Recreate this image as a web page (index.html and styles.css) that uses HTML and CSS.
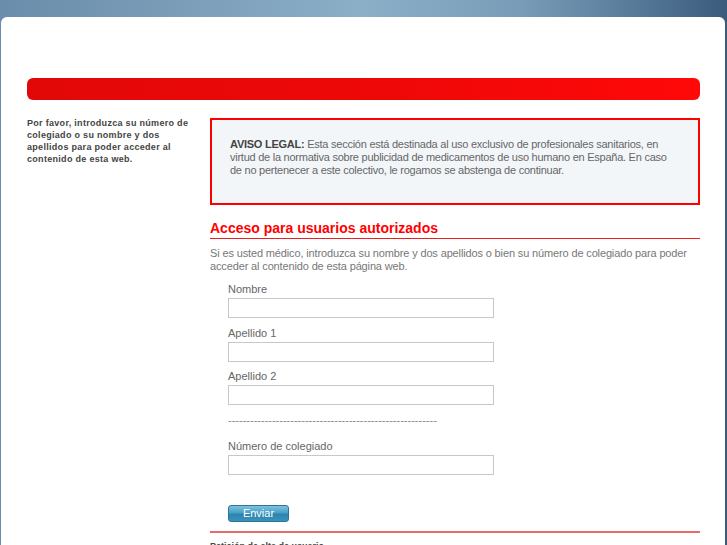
FILE: index.html
```html
<!DOCTYPE html>
<html lang="es">
<head>
<meta charset="utf-8">
<title>Acceso para usuarios autorizados</title>
<link rel="stylesheet" href="styles.css">
</head>
<body>
<div class="card">
  <div class="redbar"></div>
  <div class="row">
    <div class="side">Por favor, introduzca su número de colegiado o su nombre y dos apellidos para poder acceder al contenido de esta web.</div>
    <div class="main">
      <div class="aviso"><strong>AVISO LEGAL:</strong> Esta sección está destinada al uso exclusivo de profesionales sanitarios, en<br>virtud de la normativa sobre publicidad de medicamentos de uso humano en España. En caso<br>de no pertenecer a este colectivo, le rogamos se abstenga de continuar.</div>
      <h2 class="title">Acceso para usuarios autorizados</h2>
      <p class="intro">Si es usted médico, introduzca su nombre y dos apellidos o bien su número de colegiado para poder acceder al contenido de esta página web.</p>
      <form class="form">
        <label class="lbl">Nombre</label>
        <input class="field" type="text">
        <label class="lbl">Apellido 1</label>
        <input class="field" type="text">
        <label class="lbl">Apellido 2</label>
        <input class="field" type="text">
        <div class="dashes">---------------------------------------------------------</div>
        <label class="lbl">Número de colegiado</label>
        <input class="field" type="text">
        <button class="btn" type="button">Enviar</button>
      </form>
      <div class="sep"></div>
      <div class="alta">Petición de alta de usuario</div>
    </div>
  </div>
</div>
</body>
</html>
```
FILE: styles.css
```css
html, body {
  margin: 0;
  padding: 0;
}
body {
  height: 545px;
  overflow: hidden;
  font-family: "Liberation Sans", Arial, sans-serif;
  background: linear-gradient(90deg, #6a8dab 0%, #7b9db8 25%, #8cafc8 50%, #789cb7 72%, #5a7d9c 86%, #3b5b7d 100%);
}
.card {
  margin: 17px 2px 0 1px;
  background: #fff;
  border-radius: 6px 6px 0 0;
  padding: 61px 25px 0 26px;
  min-height: 600px;
}
.redbar {
  height: 22px;
  border-radius: 6px;
  background: linear-gradient(90deg, #e20808 0%, #ee0808 50%, #ff0808 100%);
}
.row {
  display: flex;
  gap: 15px;
  margin-top: 16px;
}
.side {
  width: 168px;
  flex: none;
  font-size: 9px;
  font-weight: bold;
  line-height: 12px;
  letter-spacing: 0.3px;
  color: #444;
  padding-top: 1px;
}
.main {
  flex: 1;
  padding-top: 2px;
}
.aviso {
  border: 2px solid #f00;
  background: #f3f6f9;
  padding: 18px 2px 26px 18px;
  font-size: 11px;
  line-height: 13px;
  letter-spacing: -0.25px;
  white-space: nowrap;
  color: #666;
}
.aviso strong {
  color: #444;
}
.title {
  margin: 15px 0 0;
  font-size: 14px;
  line-height: 17px;
  color: #f00;
  font-weight: bold;
  padding-bottom: 1px;
  border-bottom: 1px solid #e82020;
}
.intro {
  margin: 8px 0 0;
  font-size: 11px;
  line-height: 13px;
  letter-spacing: -0.14px;
  color: #777;
}
.form {
  display: flex;
  flex-direction: column;
  align-items: flex-start;
  padding-left: 18px;
  margin-top: 10px;
}
.lbl {
  font-size: 11px;
  line-height: 13px;
  color: #666;
  margin-bottom: 2px;
}
.field {
  box-sizing: border-box;
  width: 266px;
  height: 20px;
  margin: 0 0 8.5px;
  border: 1px solid #c8c8c8;
  background: #fff;
  padding: 0 3px;
}
.dashes {
  font-size: 11px;
  line-height: 13px;
  color: #888;
  margin: 0 0 13px;
}
.btn {
  margin-top: 21.5px;
  width: 61px;
  height: 17px;
  padding: 0;
  border: 1px solid #2f7396;
  border-radius: 3px;
  background: linear-gradient(180deg, #7cc3e0 0%, #4a9fc5 45%, #2d84ad 55%, #3a93bb 100%);
  color: #fff;
  font-family: "Liberation Sans", Arial, sans-serif;
  font-size: 11px;
  line-height: 15px;
}
.sep {
  margin-top: 9px;
  border-top: 2px solid #e86a6a;
}
.alta {
  margin-top: 8px;
  font-size: 9px;
  font-weight: bold;
  color: #444;
}
```
